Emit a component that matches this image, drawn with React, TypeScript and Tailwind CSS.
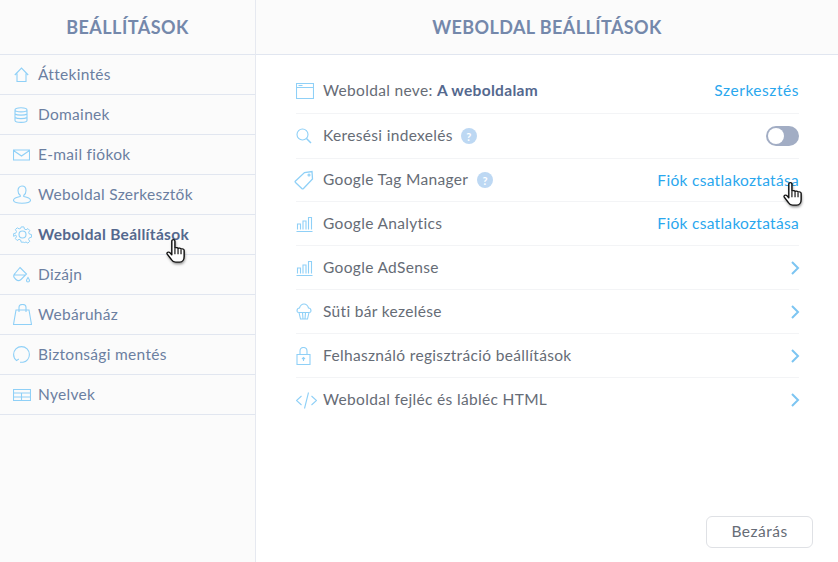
import React from "react";

const blue = "#8fd0f7";

const Ico = ({ children, w = 20, h = 20 }: { children: React.ReactNode; w?: number; h?: number }) => (
  <svg width={w} height={h} viewBox={`0 0 ${w} ${h}`} fill="none" stroke={blue} strokeWidth="1.100" className="shrink-0">
    {children}
  </svg>
);

const Hand = () => (
  <svg width="26" height="30" viewBox="0 0 20 26" preserveAspectRatio="none" className="absolute">
    <defs>
      <filter id="hs" x="-40%" y="-40%" width="180%" height="180%">
        <feGaussianBlur stdDeviation="1.300" />
      </filter>
    </defs>
    <path d="M6 2.500c0-1.500 2.400-1.500 2.400 0v6.200c1-.6 2-.4 2.400.3.900-.5 1.900-.3 2.300.5 1-.4 2.300 0 2.400 1.300v5.200c0 2.600-1.300 5-3.400 5H9c-1.700 0-2.600-1-3.400-2.400L2.500 14c-.8-1.400 1.100-2.400 2-1.300L6 14.500z" fill="#000" opacity="0.5" filter="url(#hs)" transform="translate(0.500 1.500)" />
    <path d="M6 2.500c0-1.500 2.400-1.500 2.400 0v6.200c1-.6 2-.4 2.400.3.900-.5 1.900-.3 2.300.5 1-.4 2.300 0 2.400 1.300v5.200c0 2.600-1.300 5-3.400 5H9c-1.700 0-2.600-1-3.400-2.400L2.500 14c-.8-1.400 1.100-2.400 2-1.300L6 14.500z" fill="#fff" stroke="#111" strokeWidth="1.100" strokeLinejoin="round" />
    <path d="M8.400 9v5M10.800 9.500V14M13.100 10v4" stroke="#111" strokeWidth="0.900" fill="none" />
  </svg>
);

const Chart = () => (
  <Ico w={17} h={16}>
    <path d="M0.500 15.500h16M1.500 13.500V8h3v5.500M7 13.500V5h3v8.500M12.500 13.500V1.500h3v12" />
  </Ico>
);

const sideItems: { label: string; icon: React.ReactNode; active?: boolean }[] = [
  {
    label: "Áttekintés",
    icon: (
      <span className="ml-[1px]">
        <Ico w={15} h={15}>
          <path d="M.8 8L7.500 1l6.700 7M3 6.500v8h9v-8" />
        </Ico>
      </span>
    ),
  },
  {
    label: "Domainek",
    icon: (
      <span className="ml-[1px]">
        <Ico w={14} h={16}>
          <path d="M1 3c0-3 12-3 12 0v10.500c0 2.500-12 2.500-12 0zM1 3c0 2.500 12 2.500 12 0M1 7c2 1.500 10 1.500 12 0M1 10.500c2 1.500 10 1.500 12 0" />
        </Ico>
      </span>
    ),
  },
  {
    label: "E-mail fiókok",
    icon: (
      <Ico w={17} h={12}>
        <path d="M0.500 1h16v10h-16zM0.500 1.500L8.500 7l8-5.500" />
      </Ico>
    ),
  },
  {
    label: "Weboldal Szerkesztők",
    icon: (
      <Ico w={18} h={19}>
        <path d="M9 1c2.500 0 4 2 4 4.500 0 2-1 4-2.200 4.700v1.300c3 .6 6.700 2 6.700 3.800 0 2-4 3-8.500 3s-8.500-1-8.500-3c0-1.800 3.700-3.200 6.700-3.800v-1.300C6 9.500 5 7.500 5 5.500 5 3 6.500 1 9 1z" />
      </Ico>
    ),
  },
  {
    label: "Weboldal Beállítások",
    active: true,
    icon: (
      <Ico w={19} h={19}>
        <circle cx="9.500" cy="9.500" r="3.500" />
        <path d="M8 1h3l.6 2.400 1.800.8 2.100-1.300 2 2.100-1.200 2.100.7 1.800 2.400.6v3l-2.400.6-.8 1.800 1.300 2.100-2.100 2-2.100-1.200-1.800.7L11 18H8l-.6-2.400-1.800-.8-2.100 1.300-2-2.100 1.200-2.100-.7-1.800L-.4 11.500v-3L2 7.900l.8-1.800L1.500 4l2.100-2 2.100 1.200 1.800-.7z" transform="translate(1 1) scale(.9)" />
      </Ico>
    ),
  },
  {
    label: "Dizájn",
    icon: (
      <Ico w={17} h={17}>
        <path d="M7 1.500l6.500 6.500-5.500 5.500c-1.500 1.500-3.500 1.500-5 0l-1.500-1.500c-1.200-1.500-1-3 .5-4.500zM1.500 9h11.500M15 11.500c1 1.500 1.500 2 1.500 3 0 .8-.7 1.500-1.500 1.500s-1.500-.7-1.500-1.500c0-1 .5-1.500 1.500-3z" />
      </Ico>
    ),
  },
  {
    label: "Webáruház",
    icon: (
      <Ico w={19} h={21}>
        <path d="M3 6h13l2.500 14.500H.500zM6 8V3.500C6 1.500 7.500.500 9.500.500s3.500 1 3.500 3V8" />
      </Ico>
    ),
  },
  {
    label: "Biztonsági mentés",
    icon: (
      <Ico w={17} h={17}>
        <path d="M3.500 14.500C1.600 13 .6 10.900.6 8.500a7.900 7.900 0 0 1 15.800 0c0 3.800-2.700 7-6.400 7.800M1.200 12.200l2.300 2.400 2.300-1.600M7 16.300l3 0" />
      </Ico>
    ),
  },
  {
    label: "Nyelvek",
    icon: (
      <Ico w={18} h={12}>
        <path d="M.500.500h17v11H.500zM.500 4h17M.500 8h17M8.500 4v7.500" />
      </Ico>
    ),
  },
];

const Help = () => (
  <span className="w-4 h-4 rounded-full bg-[#bdd8f3] text-white text-[11px] font-bold flex items-center justify-center leading-none">?</span>
);

const Link = ({ children }: { children: React.ReactNode }) => (
  <span className="text-[#2aa7ee] text-[15.5px] tracking-[0.3px]">{children}</span>
);

const Chevron = () => (
  <svg width="10" height="16" viewBox="0 0 10 16" fill="none" stroke="#7cc5f2" strokeWidth="2" className="mr-[-1px]">
    <path d="M2 2l6 6-6 6" />
  </svg>
);

const rows: { h: string; icon: React.ReactNode; label: React.ReactNode; right: React.ReactNode }[] = [
  {
    h: "h-[45px]",
    icon: (
      <Ico w={18} h={16}>
        <path d="M.500.500h17v15H.500zM.500 4.500h17" />
        <path d="M2.500 2.500h4" />
      </Ico>
    ),
    label: (
      <>
        Weboldal neve: <b className="font-bold text-[#54688e]">A weboldalam</b>
      </>
    ),
    right: (
      <Link>
        <span className="tracking-[0.55px]">Szerkesztés</span>
      </Link>
    ),
  },
  {
    h: "h-[45px]",
    icon: (
      <Ico w={16} h={16}>
        <circle cx="6.500" cy="6.500" r="5.500" />
        <path d="M10.500 10.500l4.500 4.500" strokeWidth="1.500" />
      </Ico>
    ),
    label: (
      <span className="flex items-center gap-[8px]">
        Keresési indexelés <Help />
      </span>
    ),
    right: (
      <span className="w-[33px] h-5 rounded-full bg-[#a2adc4] flex items-center p-[2px]">
        <span className="w-4 h-4 rounded-full bg-white" />
      </span>
    ),
  },
  {
    h: "h-[43px]",
    icon: (
      <span className="ml-[-2px] block">
        <Ico w={20} h={20}>
          <path d="M1.500 11L10.500 2.500 18 1.500l.5 7.500L9.500 18.500c-.6.500-1.200.500-1.700 0l-6.300-6c-.5-.5-.5-1 0-1.500z" strokeWidth="1.300" />
          <circle cx="15" cy="5" r="1" />
        </Ico>
      </span>
    ),
    label: (
      <span className="flex items-center gap-[9px]">
        Google Tag Manager <Help />
      </span>
    ),
    right: (
      <span className="relative">
        <Link>Fiók csatlakoztatása</Link>
        <span className="absolute left-[124px] top-[13px]">
          <Hand />
        </span>
      </span>
    ),
  },
  { h: "h-[44px]", icon: <Chart />, label: "Google Analytics", right: <Link>Fiók csatlakoztatása</Link> },
  { h: "h-[44px]", icon: <Chart />, label: "Google AdSense", right: <Chevron /> },
  {
    h: "h-[44px]",
    icon: (
      <Ico w={16} h={17}>
        <path d="M3 9.500L4.500 16h7L13 9.500M1 8c0-2 1-3 2.500-3 .5-2 2.500-4 4.500-4s4 2 4.500 4C14 5 15 6 15 8c0 1-1 1.500-2 1.500H3C2 9.500 1 9 1 8zM6.500 9.500l.5 6.500M9.500 9.500L9 16" />
      </Ico>
    ),
    label: "Süti bár kezelése",
    right: <Chevron />,
  },
  {
    h: "h-[44px]",
    icon: (
      <Ico w={15} h={18}>
        <path d="M1 7.500h13v10H1zM4 7.500V4c0-2 1.500-3.500 3.500-3.500S11 2 11 4v3.500" />
        <path d="M7.500 14v-3.500M6 12l1.500-1.500L9 12" />
      </Ico>
    ),
    label: "Felhasználó regisztráció beállítások",
    right: <Chevron />,
  },
  {
    h: "h-[44px]",
    icon: (
      <Ico w={21} h={17}>
        <path d="M5.500 4l-5 4.500 5 4.500M15.500 4l5 4.500-5 4.500M12.500 .5l-4 16" />
      </Ico>
    ),
    label: "Weboldal fejléc és lábléc HTML",
    right: <Chevron />,
  },
];

export default function App() {
  return (
    <div className="w-[838px] h-[562px] flex overflow-hidden bg-white font-['Lato','Liberation_Sans',sans-serif]">
      <aside className="w-[256px] h-full shrink-0 bg-[#fbfbfb] border-r border-[#e6e9f0]">
        <div className="h-[55px] border-b border-[#e1e6f0] flex items-center justify-center text-[18px] font-bold tracking-[0.45px] text-[#7488ab]">
          BEÁLLÍTÁSOK
        </div>
        {sideItems.map((it) => (
          <div key={it.label} className="h-10 border-b border-[#e1e6f0] flex items-center relative">
            <span className="w-[38px] pl-[13px] flex items-center shrink-0">{it.icon}</span>
            <span className={`text-[15.5px] tracking-[0.3px] ${it.active ? "font-bold text-[#54688e]" : "text-[#6b7fa1]"}`}>{it.label}</span>
            {it.active && (
              <span className="absolute left-[164px] top-[23px]">
                <Hand />
              </span>
            )}
          </div>
        ))}
      </aside>
      <main className="flex-1 flex flex-col min-w-0">
        <div className="h-[55px] shrink-0 bg-[#fbfbfb] border-b border-[#e1e6f0] flex items-center justify-center text-[18px] font-bold tracking-[0.4px] text-[#7488ab]">
          WEBOLDAL BEÁLLÍTÁSOK
        </div>
        <div className="flex-1 pl-10 pr-[39px] pt-[14px]">
          {rows.map((r, i) => (
            <div key={i} className={`${r.h} flex items-center ${i < rows.length - 1 ? "border-b border-[#f3f4f6]" : ""}`}>
              <span className="w-[27px] shrink-0 flex items-center">{r.icon}</span>
              <span className="flex-1 text-[15.5px] tracking-[0.33px] text-[#666c76]">{r.label}</span>
              {r.right}
            </div>
          ))}
        </div>
        <div className="flex justify-end pr-[25px] pb-[14px]">
          <button className="w-[107px] h-8 rounded-md border border-[#dfe1e5] bg-white text-[15.5px] tracking-[0.5px] text-[#666c76]">Bezárás</button>
        </div>
      </main>
    </div>
  );
}
